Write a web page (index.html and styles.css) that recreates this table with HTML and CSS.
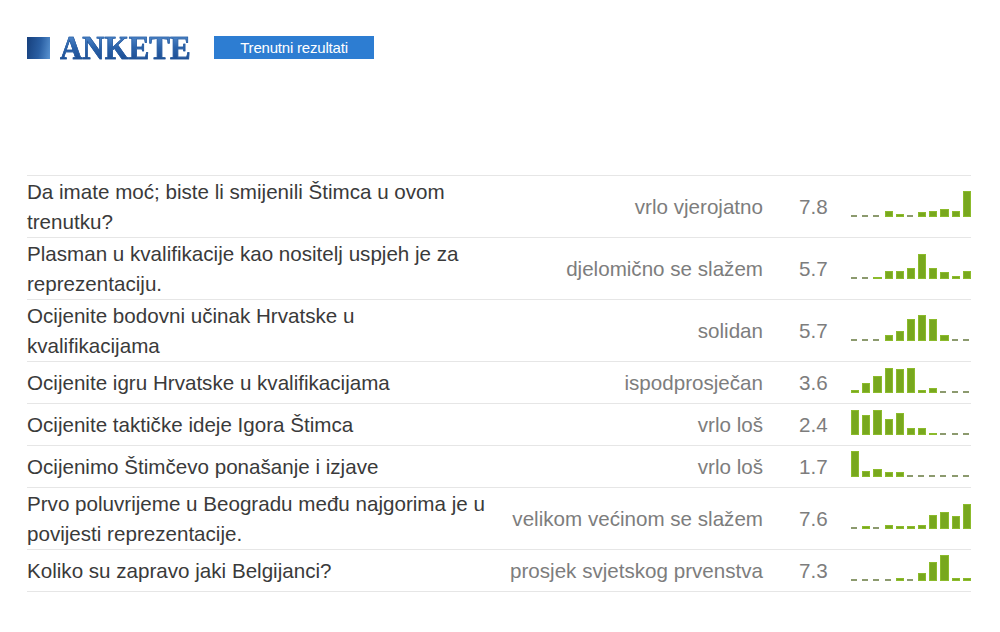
FILE: index.html
```html
<!DOCTYPE html>
<html lang="hr">
<head>
<meta charset="utf-8">
<title>Ankete</title>
<link rel="stylesheet" href="styles.css">
</head>
<body>
<div class="page">
  <div class="header">
    <span class="square"></span>
    <h1 class="title">ANKETE</h1>
    <span class="badge">Trenutni rezultati</span>
  </div>

  <div class="polls">
    <div class="row">
      <div class="q">Da imate moć; biste li smijenili Štimca u ovom trenutku?</div>
      <div class="a">vrlo vjerojatno</div>
      <div class="s">7.8</div>
      <div class="spark"><i class="z"></i><i class="z"></i><i class="z"></i><i style="height:6px"></i><i style="height:3px"></i><i class="z"></i><i style="height:5px"></i><i style="height:6px"></i><i style="height:8px"></i><i style="height:6px"></i><i style="height:26px"></i></div>
    </div>
    <div class="row">
      <div class="q">Plasman u kvalifikacije kao nositelj uspjeh je za reprezentaciju.</div>
      <div class="a">djelomično se slažem</div>
      <div class="s">5.7</div>
      <div class="spark"><i class="z"></i><i class="z"></i><i style="height:2px"></i><i style="height:8px"></i><i style="height:8px"></i><i style="height:11px"></i><i style="height:25px"></i><i style="height:11px"></i><i style="height:7px"></i><i style="height:3px"></i><i style="height:8px"></i></div>
    </div>
    <div class="row">
      <div class="q">Ocijenite bodovni učinak Hrvatske u kvalifikacijama</div>
      <div class="a">solidan</div>
      <div class="s">5.7</div>
      <div class="spark"><i class="z"></i><i class="z"></i><i class="z"></i><i style="height:6px"></i><i style="height:10px"></i><i style="height:22px"></i><i style="height:26px"></i><i style="height:22px"></i><i style="height:6px"></i><i class="z"></i><i class="z"></i></div>
    </div>
    <div class="row">
      <div class="q">Ocijenite igru Hrvatske u kvalifikacijama</div>
      <div class="a">ispodprosječan</div>
      <div class="s">3.6</div>
      <div class="spark"><i style="height:3px"></i><i style="height:10px"></i><i style="height:17px"></i><i style="height:25px"></i><i style="height:24px"></i><i style="height:25px"></i><i style="height:3px"></i><i style="height:5px"></i><i class="z"></i><i class="z"></i><i class="z"></i></div>
    </div>
    <div class="row">
      <div class="q">Ocijenite taktičke ideje Igora Štimca</div>
      <div class="a">vrlo loš</div>
      <div class="s">2.4</div>
      <div class="spark"><i style="height:25px"></i><i style="height:20px"></i><i style="height:25px"></i><i style="height:16px"></i><i style="height:22px"></i><i style="height:7px"></i><i style="height:7px"></i><i style="height:2px"></i><i class="z"></i><i class="z"></i><i class="z"></i></div>
    </div>
    <div class="row">
      <div class="q">Ocijenimo Štimčevo ponašanje i izjave</div>
      <div class="a">vrlo loš</div>
      <div class="s">1.7</div>
      <div class="spark"><i style="height:26px"></i><i style="height:6px"></i><i style="height:8px"></i><i style="height:5px"></i><i style="height:5px"></i><i class="z"></i><i class="z"></i><i class="z"></i><i class="z"></i><i class="z"></i><i class="z"></i></div>
    </div>
    <div class="row">
      <div class="q">Prvo poluvrijeme u Beogradu među najgorima je u povijesti reprezentacije.</div>
      <div class="a">velikom većinom se slažem</div>
      <div class="s">7.6</div>
      <div class="spark"><i class="z"></i><i style="height:3px"></i><i class="z"></i><i style="height:4px"></i><i style="height:3px"></i><i style="height:3px"></i><i style="height:4px"></i><i style="height:14px"></i><i style="height:17px"></i><i style="height:13px"></i><i style="height:25px"></i></div>
    </div>
    <div class="row">
      <div class="q">Koliko su zapravo jaki Belgijanci?</div>
      <div class="a">prosjek svjetskog prvenstva</div>
      <div class="s">7.3</div>
      <div class="spark"><i class="z"></i><i class="z"></i><i class="z"></i><i class="z"></i><i style="height:3px"></i><i class="z"></i><i style="height:8px"></i><i style="height:19px"></i><i style="height:26px"></i><i style="height:3px"></i><i style="height:3px"></i></div>
    </div>
  </div>
</div>
</body>
</html>
```

FILE: styles.css
```css
html, body {
  margin: 0;
  padding: 0;
  background: #ffffff;
}

.page {
  padding: 36px 29px 0 27px;
  font-family: "Liberation Sans", Arial, sans-serif;
}

.header {
  display: flex;
  align-items: center;
  height: 23px;
}

.square {
  width: 23px;
  height: 22px;
  background: linear-gradient(100deg, #163f7c 0%, #2a5fa3 55%, #5a94d2 100%);
}

.title {
  margin: 0 0 0 10px;
  width: 131px;
  font-family: "Liberation Serif", serif;
  font-weight: bold;
  font-size: 30px;
  line-height: 23px;
  letter-spacing: 0;
  white-space: nowrap;
  transform: scale(1.03, 1.1);
  transform-origin: left center;
  color: #2a62aa;
  -webkit-text-stroke: 0.6px #24599e;
  background: linear-gradient(to bottom, #5189cc 0%, #2a62aa 50%, #1c4d92 100%);
  -webkit-background-clip: text;
  background-clip: text;
  -webkit-text-fill-color: transparent;
}

.badge {
  margin-left: 23px;
  width: 160px;
  height: 23px;
  box-sizing: border-box;
  display: flex;
  align-items: center;
  justify-content: center;
  background: #2d7dd2;
  color: #ffffff;
  font-size: 15px;
  letter-spacing: -0.2px;
}

.polls {
  margin-top: 116px;
  border-top: 1px solid #e6e6e6;
  width: 944px;
}

.row {
  display: grid;
  grid-template-columns: 460px 1fr 88px 120px;
  align-items: center;
  min-height: 41px;
  padding-top: 1px;
  border-bottom: 1px solid #e6e6e6;
  box-sizing: border-box;
  font-size: 20.6px;
  line-height: 30px;
}

.q {
  color: #3a3a3a;
}

.a {
  color: #7d7d7d;
  text-align: right;
  white-space: nowrap;
}

.s {
  color: #7d7d7d;
  padding-left: 36px;
}

.spark {
  display: grid;
  grid-template-columns: repeat(11, 1fr);
  column-gap: 3px;
  align-items: end;
  height: 30px;
  margin-bottom: 10px;
  align-self: center;
}

.spark i {
  display: block;
  background: #78a81e;
  box-shadow: inset 0 0 0 1px #8cbb2c;
}

.spark i.z {
  height: 2px;
  width: 6px;
  background: #8c9a6e;
  box-shadow: none;
}
```
